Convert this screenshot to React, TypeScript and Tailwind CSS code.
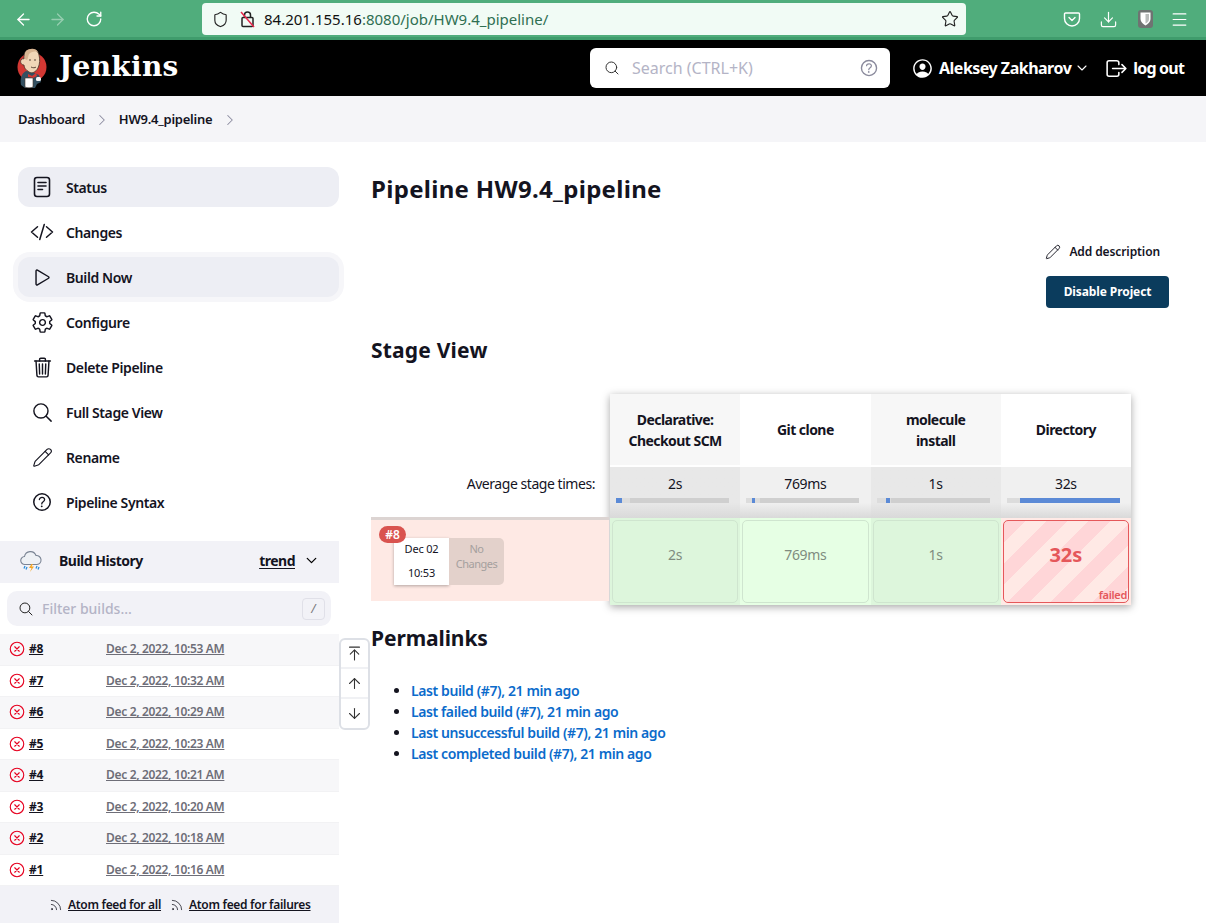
import {
  ArrowDown,
  ArrowLeft,
  ArrowRight,
  ArrowUp,
  ArrowUpToLine,
  ChevronDown,
  ChevronRight,
  Download,
  Menu,
  Pencil,
  RotateCw,
  Rss,
  Search,
  Shield,
  Star,
} from 'lucide-react';
import {
  IoCloseCircleOutline,
  IoCodeSlashOutline,
  IoHelpCircleOutline,
  IoLogOutOutline,
  IoPersonCircleOutline,
  IoPlayOutline,
  IoSearchOutline,
  IoSettingsOutline,
  IoTrashOutline,
} from 'react-icons/io5';

const sans = "font-['Noto_Sans','Open_Sans',sans-serif]";

function StatusIcon() {
  return (
    <svg width="20" height="22" viewBox="0 0 20 22" fill="none" stroke="#14141f" strokeWidth="1.6" strokeLinecap="round">
      <rect x="2.5" y="1.5" width="15" height="19" rx="2.5" />
      <path d="M6 6.5h8M6 10h8M6 13.5h4.5" />
    </svg>
  );
}

function BrokenLock() {
  return (
    <svg width="16" height="18" viewBox="0 0 16 18" fill="none">
      <rect x="2" y="7.5" width="11" height="9" rx="1" stroke="#222" strokeWidth="1.5" />
      <path d="M4.5 7.5V5a3 3 0 0 1 6 0v2.5" stroke="#222" strokeWidth="1.5" />
      <path d="M1 2l13 15" stroke="#e8264a" strokeWidth="1.5" />
    </svg>
  );
}

function PocketIcon() {
  return (
    <svg width="18" height="18" viewBox="0 0 18 18" fill="none" stroke="#fff" strokeWidth="1.4" strokeLinecap="round" strokeLinejoin="round">
      <path d="M2.5 3h13a1 1 0 0 1 1 1v4.5a7.5 7.5 0 0 1-15 0V4a1 1 0 0 1 1-1z" />
      <path d="M6 7.5l3 3 3-3" />
    </svg>
  );
}

function VaultIcon() {
  return (
    <div className="flex h-[18px] w-[15px] items-center justify-center rounded-[3px] bg-[#6f7372]">
      <svg width="11" height="14" viewBox="0 0 11 14">
        <path d="M0.5 0.5h10v6.5c0 3-2.5 5-5 6.5-2.5-1.5-5-3.5-5-6.5z" fill="#fff" />
        <path d="M5.5 2h3.5v5c0 2-1.6 3.5-3.5 4.6z" fill="#b9bcbb" />
      </svg>
    </div>
  );
}

function JenkinsLogo() {
  return (
    <svg width="34" height="42" viewBox="0 0 34 42">
      <circle cx="16" cy="20" r="14.5" fill="#d33833" />
      <path d="M5 38c-1-6 0-11 5-14l6 1 7 3 2 7-4 2-2 4H9z" fill="#335061" />
      <path d="M10 4c5-3 12-2 13 4 1 4 1 9-1 13-2 4-6 6-9 4-3-2-5-4-5-7-3 0-4-3-3-5s3-1 3-1c0-3 0-6 2-8z" fill="#f0d6b7" stroke="#49352a" strokeWidth="0.8" />
      <path d="M10 4c4-3 10-3 12 1-4-1-7 0-9 2-1 2-1 5-2 6l-2-1c0-3 0-6 1-8z" fill="#d8b592" />
      <path d="M13 13h2M18 13h2M15 20c2 1 4 1 5 0" stroke="#49352a" strokeWidth="0.9" fill="none" />
      <path d="M12 27l4 2 4-3 1 3-4 2-5-1z" fill="#d33833" />
      <path d="M9 31h8v9c-2 1-6 1-8 0z" fill="#fff" stroke="#49352a" strokeWidth="0.6" />
      <rect x="20" y="30" width="5" height="4" rx="1.5" fill="#f5f5f5" />
    </svg>
  );
}

function WeatherIcon() {
  return (
    <svg width="24" height="24" viewBox="0 0 24 24" fill="none">
      <path d="M6 15.5a4 4 0 0 1-.5-8A6 6 0 0 1 17 6.5a4.5 4.5 0 0 1 1 9z" fill="#eef1f5" stroke="#7a8494" strokeWidth="1.1" />
      <path d="M12.5 15l-2.5 4h2.5l-1.5 4 4-5.5h-2.5l1.5-2.5z" fill="#f5a623" />
      <path d="M6 17l-1 2.5M8 18l-1 2.5M18 17l-1 2.5M20 18l-1 2.5" stroke="#2e8fdc" strokeWidth="1.3" />
    </svg>
  );
}

const tasks = [
  { label: 'Status', icon: <StatusIcon />, cls: 'bg-[#edeef4] font-bold' },
  { label: 'Changes', icon: <IoCodeSlashOutline size={24} />, cls: '' },
  { label: 'Build Now', icon: <IoPlayOutline size={23} />, cls: 'bg-[#edeef4] ring-[5px] ring-[#f6f6f9]' },
  { label: 'Configure', icon: <IoSettingsOutline size={23} />, cls: '' },
  { label: 'Delete Pipeline', icon: <IoTrashOutline size={23} />, cls: '' },
  { label: 'Full Stage View', icon: <IoSearchOutline size={23} />, cls: '' },
  { label: 'Rename', icon: <Pencil size={21} strokeWidth={1.3} />, cls: '' },
  { label: 'Pipeline Syntax', icon: <IoHelpCircleOutline size={24} />, cls: '' },
];

const builds = [
  { id: '#8', date: 'Dec 2, 2022, 10:53 AM' },
  { id: '#7', date: 'Dec 2, 2022, 10:32 AM' },
  { id: '#6', date: 'Dec 2, 2022, 10:29 AM' },
  { id: '#5', date: 'Dec 2, 2022, 10:23 AM' },
  { id: '#4', date: 'Dec 2, 2022, 10:21 AM' },
  { id: '#3', date: 'Dec 2, 2022, 10:20 AM' },
  { id: '#2', date: 'Dec 2, 2022, 10:18 AM' },
  { id: '#1', date: 'Dec 2, 2022, 10:16 AM' },
];

const stages = [
  { name: 'Declarative: Checkout SCM', nameCls: 'px-3', avg: '2s', head: 'bg-[#f7f7f7]', avgBg: 'from-[#e8e8e8]', barCls: 'ml-0 w-[6px]', cell: 'bg-[#ddf6dc]', wrap: 'bg-[#ddf6dc]' },
  { name: 'Git clone', nameCls: '', avg: '769ms', head: 'bg-white', avgBg: 'from-[#f0f0f0]', barCls: 'ml-[6px] w-[3px]', cell: 'bg-[#e6ffe4]', wrap: 'bg-[#e6ffe4]' },
  { name: 'molecule install', nameCls: 'px-10', avg: '1s', head: 'bg-[#f7f7f7]', avgBg: 'from-[#e8e8e8]', barCls: 'ml-[9px] w-[4px]', cell: 'bg-[#ddf6dc]', wrap: 'bg-[#ddf6dc]' },
  { name: 'Directory', nameCls: '', avg: '32s', head: 'bg-white', avgBg: 'from-[#f0f0f0]', barCls: 'ml-[13px] w-[100px]', cell: '', wrap: 'bg-[#ffeae6]' },
];

const permalinks = [
  'Last build (#7), 21 min ago',
  'Last failed build (#7), 21 min ago',
  'Last unsuccessful build (#7), 21 min ago',
  'Last completed build (#7), 21 min ago',
];

function BrowserBar() {
  return (
    <div className="flex h-[40px] items-start border-b-[3px] border-[#3f9c6c] bg-[#50ad7c] pt-[3px] text-white">
      <div className="flex h-[32px] w-[202px] items-center gap-[15px] pl-[14px]">
        <ArrowLeft size={19} strokeWidth={1.6} />
        <ArrowRight size={19} strokeWidth={1.6} className="opacity-40" />
        <RotateCw size={18} strokeWidth={1.8} className="ml-[3px]" />
      </div>
      <div className={`flex h-[32px] w-[764px] items-center rounded-[4px] bg-[#f1fbf5] pl-[10px] pr-[6px] text-[15px] ${sans}`}>
        <Shield size={17} strokeWidth={1.6} className="text-[#222]" />
        <span className="ml-[11px]"><BrokenLock /></span>
        <span className="ml-[8px] text-[#111]">84.201.155.16</span>
        <span className="text-[#2f6f52]">:8080/job/HW9.4_pipeline/</span>
        <Star size={18} strokeWidth={1.5} className="ml-auto mr-[1px] text-[#222]" />
      </div>
      <div className="flex h-[32px] flex-1 items-center pl-[97px]">
        <PocketIcon />
        <Download size={19} strokeWidth={1.5} className="ml-[18px]" />
        <span className="ml-[20px]"><VaultIcon /></span>
        <Menu size={19} strokeWidth={1.5} className="ml-[17px]" />
      </div>
    </div>
  );
}

function JenkinsHeader() {
  return (
    <div className="flex h-[56px] items-center bg-black text-white">
      <div className="ml-[16px] flex w-[574px] items-center">
        <JenkinsLogo />
        <span className="mb-[2px] ml-[9px] font-['DejaVu_Serif',serif] text-[28px] font-bold leading-none tracking-[0.3px]">Jenkins</span>
      </div>
      <div className={`flex h-[40px] w-[300px] items-center rounded-[6px] bg-white pl-[14px] pr-[10px] text-[16px] text-[#b4b4c6] ${sans}`}>
        <Search size={16} strokeWidth={1.5} className="text-[#333]" />
        <span className="ml-[12px]">Search (CTRL+K)</span>
        <IoHelpCircleOutline size={22} className="ml-auto text-[#8a8a9c]" />
      </div>
      <div className={`ml-[21px] flex items-center text-[16px] font-bold tracking-[-0.5px] ${sans}`}>
        <IoPersonCircleOutline size={23} />
        <span className="ml-[5px]">Aleksey Zakharov</span>
        <ChevronDown size={16} strokeWidth={1.6} className="ml-[3px]" />
        <IoLogOutOutline size={25} className="ml-[14px]" />
        <span className="ml-[4px] tracking-[-0.8px]">log out</span>
      </div>
    </div>
  );
}

function Breadcrumbs() {
  return (
    <div className={`flex h-[46px] items-center bg-[#f5f5f8] pl-[18px] pt-[1px] text-[13px] font-semibold tracking-[-0.25px] text-[#14141f] ${sans}`}>
      <span>Dashboard</span>
      <ChevronRight size={18} strokeWidth={1.4} className="ml-[8px] text-[#8c8ca0]" />
      <span className="ml-[8px]">HW9.4_pipeline</span>
      <ChevronRight size={18} strokeWidth={1.4} className="ml-[9px] text-[#8c8ca0]" />
    </div>
  );
}

function BuildHistory() {
  return (
    <div className="mt-[19px]">
      <div className="flex h-[42px] items-center bg-[#f2f2f7] pb-[3px] pl-[19px] pr-[19px]">
        <WeatherIcon />
        <span className="ml-[16px] text-[14px] font-bold tracking-[-0.5px] text-[#14141f]">Build History</span>
        <span className="ml-auto text-[14px] font-bold tracking-[-0.5px] text-[#14141f] underline underline-offset-2">trend</span>
        <ChevronDown size={17} strokeWidth={1.8} className="ml-[8px]" />
      </div>
      <div className="ml-[7px] mt-[8px] flex h-[35px] w-[324px] items-center rounded-[10px] bg-[#f2f2f7] pl-[11px] pr-[6px]">
        <IoSearchOutline size={16} className="text-[#222]" />
        <span className="ml-[8px] text-[14px] font-medium text-[#b4b4c6]">Filter builds...</span>
        <span className="ml-auto flex h-[22px] w-[23px] items-center justify-center rounded-[4px] border border-[#e0e0e8] text-[12px] italic text-[#777]">/</span>
      </div>
      <div className="mt-[8px]">
        {builds.map((b, i) => (
          <div key={b.id} className={`flex h-[31.5px] items-center border-b border-[#f2f2f4] pl-[8px] ${i % 2 === 0 ? 'bg-[#f7f7f9]' : 'bg-white'}`}>
            <IoCloseCircleOutline size={18} className="text-[#e6001f]" />
            <span className="ml-[3px] w-[77px] text-[12px] font-bold tracking-[-0.2px] text-[#14141f] underline">{b.id}</span>
            <span className="text-[12px] font-semibold tracking-[-0.33px] text-[#6e6e78] underline">{b.date}</span>
          </div>
        ))}
      </div>
      <div className="flex h-[37px] items-center gap-[9px] bg-[#f2f2f7] pl-[49px] pt-[1px] text-[12px] font-semibold tracking-[-0.3px] text-[#14141f]">
        <span className="flex items-center gap-[5px]"><Rss size={14} strokeWidth={1.3} /><span className="underline">Atom feed for all</span></span>
        <span className="flex items-center gap-[5px]"><Rss size={14} strokeWidth={1.3} /><span className="underline">Atom feed for failures</span></span>
      </div>
    </div>
  );
}

function Sidebar() {
  return (
    <div className="relative w-[339px] shrink-0 pt-[25px]">
      <div className="ml-[18px] flex flex-col gap-[5px]">
        {tasks.map((t) => (
          <div key={t.label} className={`flex h-[40px] items-center rounded-[12px] text-[14px] font-semibold tracking-[-0.4px] text-[#14141f] ${t.cls}`}>
            <span className="flex w-[48px] justify-center">{t.icon}</span>
            <span>{t.label}</span>
          </div>
        ))}
      </div>
      <BuildHistory />
      {/* scroll buttons float over the gutter */}
      <div className="absolute left-[339px] top-[496px] z-10 flex w-[31px] flex-col items-center rounded-[6px] border-2 border-[#dde0e6] bg-white text-[#333]">
        <span className="flex h-[29px] w-full items-center justify-center border-b-2 border-[#f0f1f4]"><ArrowUpToLine size={17} strokeWidth={1.5} /></span>
        <span className="flex h-[30px] w-full items-center justify-center border-b-2 border-[#f0f1f4]"><ArrowUp size={17} strokeWidth={1.5} /></span>
        <span className="flex h-[29px] w-full items-center justify-center"><ArrowDown size={17} strokeWidth={1.5} /></span>
      </div>
    </div>
  );
}

function StageView() {
  return (
    <div className="mt-[29px] flex items-start text-[14px] text-[#14141f]">
      <div className="w-[238px] shrink-0">
        <div className="h-[73px]" />
        <div className="flex h-[50px] justify-end pr-[14px] pt-[6px] tracking-[-0.45px]">Average stage times:</div>
        <div className="relative flex h-[84px] items-start border-t-[3px] border-[#dcd4d2] bg-[#fee9e4] pl-[23px] pt-[18px]">
          <span className="absolute left-[8px] top-[6px] flex h-[17px] w-[27px] items-center justify-center rounded-full bg-[#d9534f] text-[12px] font-semibold text-white">#8</span>
          <div className="flex h-[47px] w-[55px] flex-col items-center justify-between bg-white pb-[4px] pt-[3px] text-[11px] tracking-[-0.2px] shadow-[0_1px_3px_rgba(0,0,0,0.3)]">
            <span>Dec 02</span>
            <span>10:53</span>
          </div>
          <div className="flex h-[47px] w-[55px] flex-col items-center rounded-r-[5px] bg-[#e3d1cb] pt-[3px] text-center text-[11px] leading-[15px] tracking-[-0.5px] text-[#a5a09e]">
            No Changes
          </div>
        </div>
      </div>
      <div className="ml-[1px] grid w-[521px] grid-cols-4 bg-white shadow-[0_2px_8px_rgba(0,0,0,0.35)]">
        {stages.map((s) => (
          <div key={s.name} className="flex flex-col">
            <div className={`flex h-[71px] items-center justify-center text-center font-bold leading-[21px] tracking-[-0.55px] ${s.head} ${s.nameCls}`}>{s.name}</div>
            <div className={`mt-[2px] flex h-[51px] flex-col items-center bg-gradient-to-b from-70% to-[#d9d9d9] pt-[6px] ${s.avgBg}`}>
              <span className="tracking-[-0.3px]">{s.avg}</span>
              <div className="ml-[6px] mt-[4px] flex h-[5px] w-[113px] self-start bg-[linear-gradient(to_right,#dcdcdc_14px,#cfcfcf_14px)]">
                <div className={`h-full bg-[#5b8ad6] ${s.barCls}`} />
              </div>
            </div>
            <div className={`h-[87px] p-[2px] ${s.wrap}`}>
              {s.avg === '32s' ? (
                <div className="relative flex h-[83px] items-center justify-center rounded-[5px] border-[1.5px] border-[#e5585a] bg-[repeating-linear-gradient(135deg,#ffd6d8_0,#ffd6d8_15px,#ffe9e5_15px,#ffe9e5_30px)] pb-[14px] text-[20px] font-bold text-[#e5575a]">
                  {s.avg}
                  <span className="absolute bottom-[2px] right-[1px] text-[11px] font-semibold leading-none tracking-[-0.3px]">failed</span>
                </div>
              ) : (
                <div className={`flex h-[83px] items-center justify-center rounded-[5px] border border-[#cfe5cf] pb-[14px] tracking-[-0.3px] text-[#7f8c7f] ${s.cell}`}>{s.avg}</div>
              )}
            </div>
          </div>
        ))}
      </div>
    </div>
  );
}

function Content() {
  return (
    <div className="min-w-0 flex-1 pl-[32px] pt-[30px] pr-[37px] text-[#14141f]">
      <h1 className="text-[24px] font-bold leading-[34px] tracking-[0.3px]">Pipeline HW9.4_pipeline</h1>
      <div className="mt-[37px] flex flex-col items-end">
        <div className="mr-[9px] flex items-center gap-[8px] text-[12px] font-semibold tracking-[-0.1px]">
          <Pencil size={16} strokeWidth={1.4} />
          Add description
        </div>
        <div className="mt-[15px] flex h-[32px] w-[123px] items-center justify-center rounded-[4px] bg-[#0b3c5d] text-[12px] font-bold tracking-[-0.1px] text-white">Disable Project</div>
      </div>
      <h2 className="mt-[27px] text-[21px] font-bold leading-[30px] tracking-[0.2px]">Stage View</h2>
      <StageView />
      <h2 className="mt-[18px] text-[21px] font-bold leading-[30px] tracking-[-0.1px]">Permalinks</h2>
      <ul className="mt-[27px] list-disc pl-[40px] text-[14px] font-semibold leading-[21px] tracking-[-0.4px] text-[#0b6bcb]">
        {permalinks.map((p) => (
          <li key={p} className="marker:text-[#14141f]">{p}</li>
        ))}
      </ul>
    </div>
  );
}

export default function App() {
  return (
    <div className={`h-[923px] w-[1206px] overflow-hidden bg-white ${sans}`}>
      <BrowserBar />
      <JenkinsHeader />
      <Breadcrumbs />
      <div className="flex">
        <Sidebar />
        <Content />
      </div>
    </div>
  );
}
